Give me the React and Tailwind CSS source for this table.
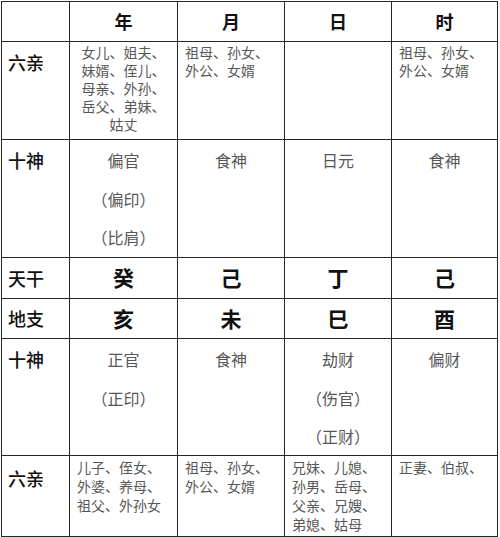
const cols = ['年', '月', '日', '时'];

const Label = ({ children }) => (
  <div className="bg-white pl-[6px] pt-[11px] text-[18px] leading-[18px] font-medium text-[#111]">{children}</div>
);

const Lines = ({ lines, center = false, leading = 'leading-[18px]', pad = 'pt-[1px]' }) => (
  <div className={`bg-white px-[7px] ${pad} text-[14px] ${leading} font-normal text-[#575757] ${center ? 'text-center' : ''}`}>
    {lines.map((l, i) => (
      <div key={i} className="whitespace-nowrap">{l}</div>
    ))}
  </div>
);

const Gods = ({ lines }) => (
  <div className="bg-white pt-px text-center text-[16px] leading-[38.5px] font-normal text-[#575757]">
    {lines.map((l, i) => (
      <div key={i}>{l}</div>
    ))}
  </div>
);

const Stem = ({ children }) => (
  <div className="bg-white flex items-center justify-center text-[21px] font-bold text-[#111]">{children}</div>
);

const SideLabel = ({ children }) => (
  <div className="bg-white flex items-center pl-[6px] text-[18px] font-medium text-[#111]">{children}</div>
);

export default function App() {
  return (
    <div className="w-[500px] h-[537px] bg-white font-['Noto_Sans_CJK_SC',sans-serif]">
      <div className="ml-px mt-px inline-grid grid-cols-[67px_107px_106px_106px_105px] grid-rows-[39px_97px_117px_40px_39px_116px_80px] gap-px p-px bg-[#262626]">
        {/* header */}
        <div className="bg-white" />
        {cols.map((c) => (
          <div key={c} className="bg-white flex items-center justify-center text-[18px] font-bold text-[#111]">
            {c}
          </div>
        ))}

        {/* 六亲 */}
        <Label>六亲</Label>
        <Lines center lines={['女儿、姐夫、', '妹婿、侄儿、', '母亲、外孙、', '岳父、弟妹、', '姑丈']} />
        <Lines lines={['祖母、孙女、', '外公、女婿']} />
        <div className="bg-white" />
        <Lines lines={['祖母、孙女、', '外公、女婿']} />

        {/* 十神 */}
        <Label>十神</Label>
        <Gods lines={['偏官', '（偏印）', '（比肩）']} />
        <Gods lines={['食神']} />
        <Gods lines={['日元']} />
        <Gods lines={['食神']} />

        {/* 天干 */}
        <SideLabel>天干</SideLabel>
        <Stem>癸</Stem>
        <Stem>己</Stem>
        <Stem>丁</Stem>
        <Stem>己</Stem>

        {/* 地支 */}
        <SideLabel>地支</SideLabel>
        <Stem>亥</Stem>
        <Stem>未</Stem>
        <Stem>巳</Stem>
        <Stem>酉</Stem>

        {/* 十神 */}
        <Label>十神</Label>
        <Gods lines={['正官', '（正印）']} />
        <Gods lines={['食神']} />
        <Gods lines={['劫财', '（伤官）', '（正财）']} />
        <Gods lines={['偏财']} />

        {/* 六亲 */}
        <div className="bg-white pl-[6px] pt-[13px] text-[18px] leading-[18px] font-medium text-[#111]">六亲</div>
        <Lines leading="leading-[19px]" pad="pt-[2px]" lines={['儿子、侄女、', '外婆、养母、', '祖父、外孙女']} />
        <Lines leading="leading-[19px]" pad="pt-[2px]" lines={['祖母、孙女、', '外公、女婿']} />
        <Lines leading="leading-[19px]" pad="pt-[2px]" lines={['兄妹、儿媳、', '孙男、岳母、', '父亲、兄嫂、', '弟媳、姑母']} />
        <Lines leading="leading-[19px]" pad="pt-[2px]" lines={['正妻、伯叔、']} />
      </div>
    </div>
  );
}
